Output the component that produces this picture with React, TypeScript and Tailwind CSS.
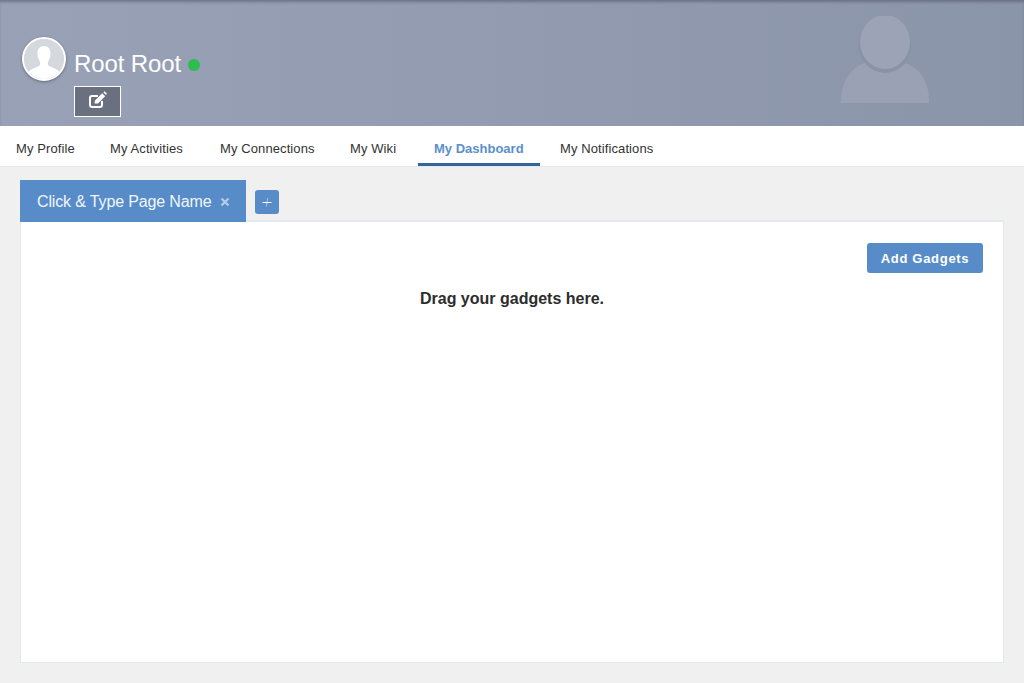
const TABS = [
  { label: "My Profile", width: "w-[90px]" },
  { label: "My Activities", width: "w-[106px]" },
  { label: "My Connections", width: "w-[126px]" },
  { label: "My Wiki", width: "w-[80px]" },
  { label: "My Dashboard", width: "w-[122px]", active: true },
  { label: "My Notifications", width: "w-[125px]" },
];

function BannerFigure() {
  return (
    <svg viewBox="0 0 88 87" className="absolute left-[841px] top-[16px] h-[87px] w-[88px]" aria-hidden="true">
      <path d="M0 85 C0 66 9 52 24 47 L64 47 C79 52 88 66 88 85 L88 87 L0 87 Z" fill="#9aa1b4" />
      <ellipse cx="44" cy="29" rx="26.5" ry="28" fill="#8993a7" />
      <ellipse cx="44" cy="26" rx="25" ry="27" fill="#9ca3b6" />
    </svg>
  );
}

function AvatarFigure() {
  return (
    <svg viewBox="0 0 40 40" className="h-[40px] w-[40px]" aria-hidden="true">
      <circle cx="20" cy="20" r="20" fill="#d5d8dc" />
      <path
        d="M20 7 C15.5 7 13.5 10.5 13.5 14.5 C13.5 18 15 21 16 23 C16.5 25 16 26.5 14 27.5 C10 29.5 6 30.5 4.5 33 C8 37.5 14 40 20 40 C26 40 32 37.5 35.5 33 C34 30.5 30 29.5 26 27.5 C24 26.5 23.5 25 24 23 C25 21 26.5 18 26.5 14.5 C26.5 10.5 24.5 7 20 7 Z"
        fill="#ffffff"
      />
    </svg>
  );
}

function EditIcon() {
  return (
    <svg viewBox="0 0 18 18" className="mb-[3px] h-[18px] w-[18px]" aria-hidden="true">
      <path d="M9 5 H3 Q1 5 1 7 V14 Q1 16 3 16 H11 Q13 16 13 14 V10" fill="none" stroke="#ffffff" strokeWidth="2" />
      <path d="M5.5 12.5 L6 9.5 L13.2 2.3 L16.2 5.3 L9 12.5 Z" fill="#ffffff" />
      <path d="M14.3 1.2 L15.5 0.3 L17.8 2.6 L17 3.9 Z" fill="#ffffff" />
    </svg>
  );
}

export default function App() {
  return (
    <div className="min-h-[683px] bg-[#f0f0f0] font-['Liberation_Sans',Arial,sans-serif] text-[#333333]">
      <header className="relative h-[126px] bg-gradient-to-r from-[#99a1b7] to-[#8b95a9] shadow-[inset_0_3px_3px_-1px_rgba(70,75,95,0.5)]">
        <BannerFigure />
        <div className="flex gap-[8px] pl-[22px] pt-[37px]">
          <div className="h-[44px] w-[44px] overflow-hidden rounded-full border-2 border-white bg-[#d5d8dc] shadow-[0_1px_3px_rgba(0,0,0,0.35)]">
            <AvatarFigure />
          </div>
          <div className="pt-[12px]">
            <div className="flex items-center gap-[7px]">
              <span className="text-[24px] leading-[30px] tracking-[-0.1px] text-white">Root Root</span>
              <span className="mt-[2px] h-[12px] w-[12px] rounded-full bg-[#2dbd4e]" />
            </div>
            <button className="mt-[7px] flex h-[31px] w-[47px] items-center justify-center border border-white bg-[#6b7080]">
              <EditIcon />
            </button>
          </div>
        </div>
      </header>

      <nav className="flex h-[41px] gap-[4px] border-b border-[#e3e8ee] bg-white">
        {TABS.map((tab) => (
          <a
            key={tab.label}
            className={
              tab.active
                ? `${tab.width} h-[40px] border-b-[3px] border-[#33659c] pl-[16px] pt-[15px] text-[13px] leading-[16px] font-bold text-[#5a8fcc]`
                : `${tab.width} h-[40px] border-b-[3px] border-transparent pl-[16px] pt-[15px] text-[13px] leading-[16px] tracking-[0.1px] whitespace-nowrap text-[#333333]`
            }
          >
            {tab.label}
          </a>
        ))}
      </nav>

      <main className="px-[20px] pt-[13px]">
        <div className="flex items-start">
          <div className="relative z-10 flex h-[42px] w-[226px] items-center bg-[#578cc9] pl-[17px] pt-[2px] text-[16px] tracking-[-0.14px] text-[#f2f6fb]">
            Click &amp; Type Page Name
            <svg viewBox="0 0 10 10" className="ml-[9px] h-[10px] w-[10px]" aria-hidden="true">
              <path d="M1.5 1.5 L8.5 8.5 M8.5 1.5 L1.5 8.5" stroke="#b5cbe6" strokeWidth="2.2" />
            </svg>
          </div>
          <button className="ml-[9px] mt-[10px] flex h-[24px] w-[24px] items-center justify-center rounded-[3px] bg-[#578cc9]">
            <svg viewBox="0 0 10 10" className="h-[10px] w-[10px]" aria-hidden="true">
              <path d="M5.8 1 L4.4 9.5" stroke="#a9c4e4" strokeWidth="1" />
              <path d="M0.5 5.5 H9.5" stroke="#ffffff" strokeWidth="1" />
            </svg>
          </button>
        </div>
        <section className="-mt-[2px] h-[443px] border border-t-2 border-[#e3e8ee] bg-white px-[20px] pt-[21px]">
          <div className="flex justify-end">
            <button className="h-[30px] w-[116px] rounded-[3px] bg-[#578cc9] pt-[1px] text-[13px] font-bold tracking-[0.7px] text-white">
              Add Gadgets
            </button>
          </div>
          <p className="mt-[17px] text-center text-[16px] font-bold leading-[18px] text-[#2d2d2d]">
            Drag your gadgets here.
          </p>
        </section>
      </main>
    </div>
  );
}
